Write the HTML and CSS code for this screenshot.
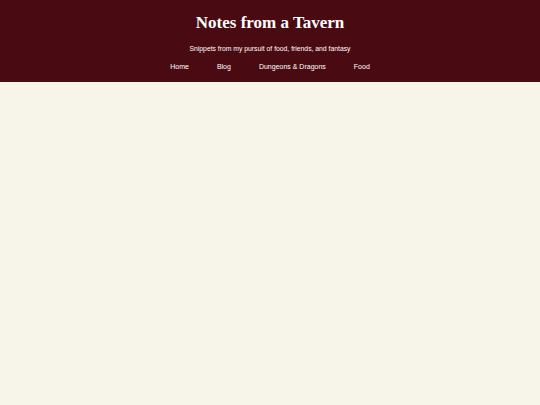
FILE: index.html
```html
<!DOCTYPE html>
<html>
<head>
<meta charset="utf-8">
<link rel="stylesheet" href="styles.css">
</head>
<body>
<header class="site-header">
  <h1 class="title">Notes from a Tavern</h1>
  <p class="tagline">Snippets from my pursuit of food, friends, and fantasy</p>
  <nav class="nav">
    <a href="#">Home</a>
    <a href="#">Blog</a>
    <a href="#">Dungeons &amp; Dragons</a>
    <a href="#">Food</a>
  </nav>
</header>
<main class="content"></main>
</body>
</html>
```
FILE: styles.css
```css
html, body {
  margin: 0;
  padding: 0;
  background: #f7f4ea;
  height: 100%;
}
.site-header {
  background: #4a0a12;
  height: 82px;
  box-sizing: border-box;
  display: flex;
  flex-direction: column;
  align-items: center;
  padding-top: 12px;
  color: #fff;
}
.title {
  margin: 0;
  font-family: "Liberation Serif", serif;
  font-weight: bold;
  font-size: 17px;
  line-height: 22px;
}
.tagline {
  margin: 10px 0 0;
  font-family: "Liberation Sans", sans-serif;
  font-size: 6.8px;
  line-height: 9px;
}
.nav {
  display: flex;
  gap: 28px;
  margin-top: 9px;
  font-family: "Liberation Sans", sans-serif;
  font-size: 7px;
  line-height: 9px;
}
.nav a {
  color: #fff;
  text-decoration: none;
}
```
